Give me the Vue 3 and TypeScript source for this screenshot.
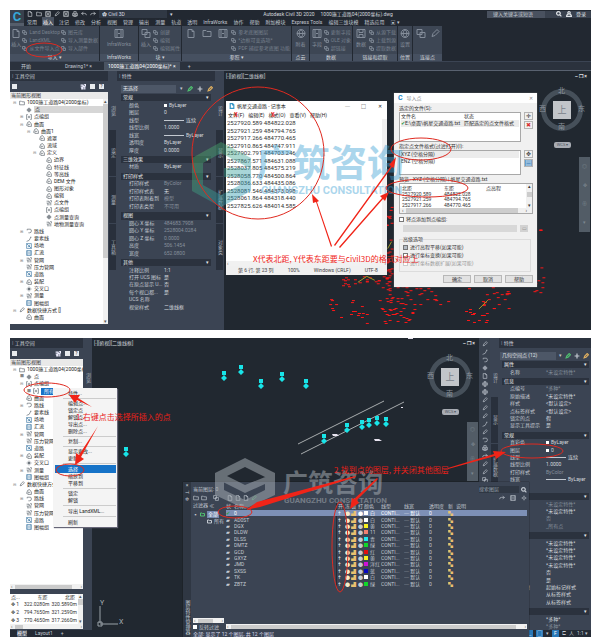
<script setup lang="ts">
import { h } from 'vue'

interface TreeRow { text: string; depth: number; icon: string; toggle?: string; on?: boolean }
interface Prop { label: string; value: string; mark?: 'swatch' | 'line' | 'dim' }
interface Section { title: string; rows: Prop[] }
interface Layer { name: string; color: string; label: string }

const shapes: Record<string, string> = {
  page: 'M2 1h4l2 2v6H2zM6 1v2h2',
  folder: 'M1 8V2h3l1 1h4v5z',
  point: 'M5 1v8M1 5h8M3 3h4v4H3z',
  group: 'M3 1H1v8h2M7 1h2v8H7M5 3v4M3 5h4',
  surface: 'M1 7l2-5 3-1 3 4v4H3zM3 8l1-3 3 1',
  line: 'M1 9q5 0 7-7M7 2h2',
  route: 'M2 2h5q2 0 2 3t-3 3H4M2 2v2',
  site: 'M1 1h8v8H1zM1 1l8 8M3 6h3V3',
  pipe: 'M1 2h4v7M8 9V5L5 3M1 5h2v4M7 1h2v3',
  cross: 'M5 1v8M1 5h8M3 3l4 4M7 3L3 7',
  frame: 'M1 1h8v8H1zM3 1v8M7 1v8M4 5h2',
  save: 'M1 1h8v8H1zM3 1v3h4V1M3 9V6h4v3',
  print: 'M1 4h8v4H1zM3 4V1h4v3M3 6h4v3H3z',
  undo: 'M4 2L1 4l3 3M1 4h5q3 0 3 3',
  redo: 'M6 2l3 2-3 3M9 4H4Q1 4 1 7',
  pen: 'M2 8l1-3 4-4 2 2-4 4z',
  block: 'M1 1h5v5H1zM4 4h5v5H4z',
  globe: 'M5 1a4 4 0 1 0 .1 0M1 5h8M5 1q-4 4 0 8q4-4 0-8',
  plus: 'M5 1v8M1 5h8',
  search: 'M4 1a3 3 0 1 0 .1 0M6 6l3 3',
  gear: 'M5 3a2 2 0 1 0 .1 0M5 1v2M5 7v2M1 5h2M7 5h2',
  user: 'M5 1a2 2 0 1 0 .1 0M1 9q0-4 4-4t4 4z',
}
const Glyph = (props: { kind: string }) =>
  h('svg', { viewBox: '0 0 10 10', 'aria-hidden': 'true' }, [h('path', { d: shapes[props.kind] ?? shapes.block })])

const t = (depth: number, text: string, icon: string, toggle = '', on = false): TreeRow => ({ depth, text, icon, toggle, on })
const drawing = '1000施工道路04(2000坐标)'

const common: TreeRow[] = [
  t(1, '路线', 'route', '+'), t(1, '要素线', 'line'), t(1, '场地', 'site'), t(1, '汇流', 'frame'),
  t(1, '管网', 'pipe', '+'), t(1, '压力管网', 'pipe'), t(1, '道路', 'site'), t(1, '装配', 'surface', '+'),
  t(1, '交叉口', 'cross'), t(1, '测量', 'pipe', '+'), t(1, '图幅组', 'frame'),
]
const treeA: TreeRow[] = [
  t(0, drawing, 'folder', '-'), t(1, '点', 'point', '', true), t(1, '点编组', 'group', '+'), t(1, '曲面', 'surface', '-'),
  t(2, '曲面1', 'surface', '-'), t(3, '遮罩', 'surface'), t(3, '流域', 'surface'), t(3, '定义', 'surface', '-'),
  t(4, '边界', 'surface'), t(4, '特征线', 'surface'), t(4, '等高线', 'surface'), t(4, 'DEM 文件', 'surface'),
  t(4, '图形对象', 'surface'), t(4, '编辑', 'surface'), t(4, '点文件', 'pipe'), t(4, '点编组', 'group'),
  t(4, '点测量查询', 'point'), t(4, '地物测量查询', 'pipe'), ...common,
  t(0, '数据快捷方式 []', 'pen', '-'), t(1, '曲面', 'surface'),
]
const treeB: TreeRow[] = [
  t(0, drawing, 'folder', '-'), t(1, '点', 'point', '■'), t(1, '点编组', 'group', '-'), t(2, '所有', 'group', '■', true),
  t(1, '曲面', 'surface'), ...common, t(0, '数据快捷方式', 'pen', '-'), t(1, '曲面', 'surface'), t(1, '路线', 'route', '+'),
  t(1, '管网', 'pipe'), t(1, '压力管网', 'pipe'), t(1, '道路', 'site'), t(1, '图幅组', 'frame'),
]

const p = (label: string, value: string, mark?: Prop['mark']): Prop => ({ label, value, mark })
const unset = '*未设定特性*'
const propsA: Section[] = [
  { title: '常规', rows: [p('颜色', 'ByLayer', 'swatch'), p('图层', '0'), p('线型', '连续', 'line'), p('线型比例', '1.0000'), p('线宽', 'ByLayer', 'line'), p('透明度', 'ByLayer'), p('厚度', '0.0000')] },
  { title: '三维效果', rows: [p('材质', 'ByLayer')] },
  { title: '打印样式', rows: [p('打印样式', 'ByColor', 'dim'), p('打印样式表', '无'), p('打印表附着到', '模型', 'dim'), p('打印表类型', '不可用', 'dim')] },
  { title: '视图', rows: [p('圆心 X 坐标', '484683.7908', 'dim'), p('圆心 Y 坐标', '2528004.0284', 'dim'), p('圆心 Z 坐标', '0.0000', 'dim'), p('高度', '506.1454', 'dim'), p('宽度', '652.0800', 'dim')] },
  { title: '其他', rows: [p('注释比例', '1:1'), p('打开 UCS 图标', '是'), p('在原点显示 U...', '否'), p('每个视口都...', '是'), p('UCS 名称', ''), p('视觉样式', '二维线框')] },
]
const propsB: Section[] = [
  { title: '属性', rows: [p('名称', unset, 'dim')] },
  { title: '信息', rows: [p('点编号', '*多种*', 'dim'), p('原始描述', unset), p('样式', '<默认设定>'), p('点标签样式', '<默认设定>'), p('锁定的点', '假'), p('显示工具提示', '是')] },
  { title: '常规', rows: [p('真彩色', 'ByLayer', 'swatch'), p('图层', '0', 'swatch'), p('线型', '连续', 'line'), p('线型比例', '1.0000'), p('打印样式', 'ByColor', 'dim'), p('线宽', 'ByLayer', 'line'), p('超链接', '')] },
  { title: '数据', rows: [p('名称', unset, 'dim'), p('描述', unset), p('锁定', '否', 'dim'), p('点编组', '_所有点', 'dim')] },
  { title: '标签', rows: [p('北距', unset), p('东距', unset), p('高程', unset), p('旋转', unset), p('固定', '否'), p('可见', '是'), p('标记选项', '起始标记样式'), p('方向', '从标签样式'), p('可见性', '从标签样式')] },
  { title: '几何', rows: [p('图形', '*多种*'), p('坐标', '*多种*', 'dim')] },
]

const ribbonTabs = ['常用', '插入', '注记', '修改', '分析', '视图', '管理', '输出', '测量', '轨道', '透明', 'InfraWorks', '协作', '帮助', '附加模块', 'Express Tools', '编辑三维块模', '精选应用']
const ribbon = [
  { title: '导入 ▾', cls: 'w90', big: ['page'], bigText: '插入', cols: [['Land Desktop', 'LandXML', '从文件导入点'], ['图元库', '导入测量数据', '导入部件']] },
  { title: 'InfraWorks', cls: 'w39', big: ['frame'], bigText: 'InfraWorks', cols: [] },
  { title: '块 ▾', cls: 'w43', big: ['block'], bigText: '插入', cols: [['创建', '编辑', '编辑属性']] },
  { title: '参照 ▾', cls: 'w108', big: ['page', 'folder', 'frame'], bigText: '', cols: [['参考底图图层', '*边框可变选项*', 'PDF 捕捉参考底图 功能']] },
  { title: '点云', cls: 'w18', big: ['globe'], bigText: '附着', cols: [] },
  { title: '数据', cls: 'w43', big: ['frame'], bigText: '字段', cols: [['更新字段', 'OLE 对象', '超链接']] },
  { title: '链接和提取', cls: 'w45', big: ['save'], bigText: '数据', cols: [['从源下载', '上载到源', '提取数据']] },
  { title: '位置', cls: 'w15', big: ['globe'], bigText: '设置', cols: [] },
  { title: '连接点', cls: 'w30', big: ['block', 'pen'], bigText: '', cols: [] },
]

const noteText = ['2527920.589 484822.028', '2527921.259 484794.765', '2527917.266 484770.465', '2527910.865 484747.911', '2527902.791 484703.246', '2527867.571 484631.088', '2528037.805 484575.219', '2528058.770 484500.864', '2528036.633 484435.086', '2528081.546 484373.098', '2528061.864 484318.440', '2527825.626 484014.585'].join('\n')

const layers: Layer[] = [
  { name: '0', color: '#ffffff', label: '白' }, { name: 'AD0ST', color: '#ffffff', label: '白' },
  { name: 'DGX', color: '#f8f020', label: '黄' }, { name: 'DLDW', color: '#f08070', label: '11' },
  { name: 'DLSS', color: '#20e8f0', label: '青' }, { name: 'DMTZ', color: '#10d828', label: '绿' },
  { name: 'GCD', color: '#e01010', label: '红' }, { name: 'GXYZ', color: '#f8f020', label: '黄' },
  { name: 'JMD', color: '#d010d8', label: '洋红' }, { name: 'SXSS', color: '#0808c0', label: '蓝' },
  { name: 'TK', color: '#ffffff', label: '白' }, { name: 'ZBTZ', color: '#10d828', label: '绿' },
]

const menuGroups: string[][] = [['特性...'], ['编辑点...', '锁定点', '解锁点', '导出点...', '删除点...'], ['复制...'], ['显示更改...', '更新'], ['选择', '缩放到', '平移到'], ['锁定', '解锁'], ['导出 LandXML...'], ['刷新']]

const surveyed: number[][] = [[223, 373], [240, 367], [260, 381], [281, 374], [305, 381], [323, 436], [346, 425], [361, 422], [368, 420], [376, 418], [385, 419], [125, 449]]

/* Scattered ground points: x, y, width, height, count for each cluster */
const clusters = [[384, 208, 6, 78, 26], [340, 278, 46, 10, 26], [325, 300, 55, 26, 22], [380, 288, 32, 38, 52], [412, 288, 34, 22, 15], [462, 290, 24, 34, 20], [484, 288, 28, 22, 16], [530, 268, 14, 28, 12], [534, 228, 6, 4, 3]]
let seed = 17
const rand = () => { seed = (seed * 16807) % 2147483647; return seed / 2147483647 }
const ground = clusters.flatMap(([x, y, w, hh, n]) => Array.from({ length: n }, () => [Math.round(x + rand() * w), Math.round(y + rand() * hh)]))
const tools = ['pen', 'line', 'route', 'point', 'page', 'globe', 'globe', 'pen', 'pen', 'pen', 'line', 'pen', 'route', 'print', 'redo', 'pen', 'pen', 'block']
</script>

<template>
  <main class="page">
    <section class="shot first">
      <header class="app-head">
        <div class="logo"><b>C</b></div>
        <div class="head-rows">
          <div class="title-row">
            <div class="qat">
              <Glyph v-for="(k, i) in ['page', 'folder', 'save', 'pen', 'save', 'print', 'undo', 'redo']" :key="i" :kind="k" class="ic" />
              <select class="product" aria-label="工作空间"><option>✿ Civil 3D</option></select><i>▾</i>
            </div>
            <div class="doc-title"><span>Autodesk Civil 3D 2020</span><span>1000施工道路04(2000坐标).dwg</span></div>
            <input class="help" aria-label="搜索" value="键入关键字或短语" />
            <div class="login"><Glyph kind="search" class="ic" /><Glyph kind="user" class="ic" />登录</div>
          </div>
          <nav class="tabs"><a v-for="(r, i) in ribbonTabs" :key="r" href="#" :class="{ on: i === 1 }">{{ r }}</a><a href="#">▣ ▾</a></nav>
        </div>
      </header>
      <div class="ribbon">
        <div v-for="r in ribbon" :key="r.title" class="rpanel" :class="r.cls">
          <div class="rbody">
            <div v-for="b in r.big" :key="b" class="big"><Glyph :kind="b" class="icb" /><span>{{ r.bigText }}</span></div>
            <ul v-for="(c, i) in r.cols" :key="i"><li v-for="x in c" :key="x"><Glyph kind="block" class="ics" />{{ x }}</li></ul>
          </div>
          <h4>{{ r.title }}</h4>
        </div>
      </div>
      <nav class="doctabs"><a href="#">开始</a><a href="#">Drawing1* <i>×</i></a><a href="#" class="on">{{ drawing }}* <i>×</i></a><a href="#">+</a></nav>

      <div class="work">
        <aside class="toolspace">
          <h3>⁞ 工具空间</h3>
          <div class="tsbar"><i class="sq"></i><span></span><Glyph kind="pipe" class="ic" /><i class="sq"></i><i class="sq">?</i></div>
          <select class="tsview" aria-label="视图"><option>当前图形视图</option></select>
          <div class="treebox">
            <ul class="tree">
              <li v-for="(r, i) in treeA" :key="i" :class="['d' + r.depth, { on: r.on }]"><b>{{ r.toggle === '+' ? '⊞' : r.toggle === '-' ? '⊟' : '' }}</b><Glyph :kind="r.icon" class="ict" :class="'k-' + r.icon" /><span>{{ r.text }}</span></li>
            </ul>
            <div class="vscroll"><i>▴</i><em></em><i>▾</i></div>
          </div>
        </aside>
        <div class="strip"><span class="lit">浏览</span><span>设定</span><span>测量</span><span>工具箱</span></div>
        <aside class="props">
          <h3>⁞ 特性</h3>
          <div class="pick"><select aria-label="对象"><option>无选择</option></select><i>▾</i><Glyph kind="pen" class="ic green" /><Glyph kind="plus" class="ic" /><Glyph kind="pen" class="ic gold" /></div>
          <div class="plist endgap">
            <template v-for="s in propsA" :key="s.title">
              <h4>{{ s.title }}<i>▾</i></h4>
              <div v-for="r in s.rows" :key="r.label" class="prow"><span>{{ r.label }}</span><span :class="r.mark"><i v-if="r.mark === 'swatch' || r.mark === 'line'"></i>{{ r.value }}</span></div>
            </template>
          </div>
        </aside>
        <div class="strip"><span class="lit">设计</span><span>显示</span><span>扩展数据</span><span>对象类</span></div>
        <div class="canvas">
          <svg class="fill" viewBox="221 71 370 259" preserveAspectRatio="xMinYMin meet">
            <rect v-for="(g, i) in ground" :key="i" :x="g[0]" :y="g[1]" width="3" height="1" fill="#ff1818" />
            <path d="M478 311l9-9M356 284l9-6 8 4M386 250l4-7" stroke="#a09a28" fill="none" />
          </svg>
          <span class="vplabel">[-][俯视][二维线框]</span>
          <span class="winctl">– ❐ ×</span>
          <div class="cube"><div class="ring"></div><b>上</b><i class="n">北</i><i class="s">南</i><i class="w">西</i><i class="e">东</i><em>WCS ▾</em></div>
          <div class="navbar"><span>◎</span><span>✥</span><span>⊕</span><span>▾</span></div>

          <section class="notepad">
            <header><Glyph kind="page" class="ic blue" /><span>帆星交通道路 - 记事本</span><i>─</i><i>□</i><i>✕</i></header>
            <nav><button>文件(F)</button><button>编辑(E)</button><button>格式(O)</button><button>查看(V)</button><button>帮助(H)</button></nav>
            <textarea aria-label="文本" spellcheck="false" :value="noteText"></textarea>
            <div class="hs"><i>‹</i><i>›</i></div>
            <footer><span>第 6 行, 第 23 列</span><span>100%</span><span>Windows (CRLF)</span><span>UTF-8</span></footer>
          </section>

          <section class="dialog">
            <header><b>C</b><span>导入点</span><i>✕</i></header>
            <div class="dbody">
              <p>选定的文件(S):</p>
              <div class="pair">
                <div class="list tall"><div class="cols"><span>文件名</span><span>状态</span></div><div class="cols sel"><span><i class="ok">✔</i>E:\桌面\帆星交通道路.txt</span><span>匹配选定的点文件格式</span></div></div>
                <div class="side"><button aria-label="添加">✛</button><button aria-label="删除" class="del">✖</button></div>
              </div>
              <p>指定点文件格式(过滤打开)(I):</p>
              <div class="pair">
                <div class="list short"><div class="sel">XYZ (空格分隔)</div><div>ENZ (空格分隔)</div></div>
                <div class="side"><button aria-label="编辑">✥</button><button aria-label="管理" class="mng">▤</button></div>
              </div>
              <p>预览 - XYZ (空格分隔) | 帆星交通道路.txt</p>
              <div class="preview">
                <table><thead><tr><th>北距</th><th>东距</th><th>点高程</th></tr></thead>
                  <tbody><tr><td>2527920.589</td><td>484822.028</td><td></td></tr><tr><td>2527921.259</td><td>484794.765</td><td></td></tr><tr><td>2527917.266</td><td>484770.465</td><td></td></tr></tbody></table>
                <div class="pvs"><i>▴</i><em></em><i>▾</i></div>
                <div class="phs"><i>‹</i><em></em><i>›</i></div>
              </div>
              <label class="chk"><input type="checkbox" />将点添加到点编组:</label>
              <div class="dis"><select disabled aria-label="点编组"></select><button disabled>▭</button></div>
              <fieldset>
                <legend>高级选项</legend>
                <label class="chk"><input type="checkbox" checked />进行高程平移(如果可能)</label>
                <label class="chk"><input type="checkbox" />进行坐标变换(如果可能)</label>
                <label class="chk off"><input type="checkbox" disabled />进行坐标数据扩展(如果可能)</label>
              </fieldset>
              <div class="btns"><button>确定</button><button>取消</button><button>帮助</button></div>
            </div>
          </section>
        </div>
      </div>

      <svg class="fill notes" viewBox="10 10 581 320" preserveAspectRatio="xMinYMin meet">
        <defs><linearGradient id="wm" x1="0" y1="0" x2="1" y2="1"><stop offset="0" stop-color="#58b858" /><stop offset="1" stop-color="#2090c8" /></linearGradient></defs>
        <g opacity=".42">
          <path d="M192 158l29-16 30 16v11l-30-16-18 10v22l18 10 19-10v-8h-16v-9h27v23l-30 16-29-16z" fill="url(#wm)" />
          <text x="256" y="177" font-size="37" font-weight="700" fill="#3a9fd4">广筑咨询</text>
          <text x="261" y="194" font-size="11" font-weight="700" fill="#3a9fd4" class="lat">GUANGZHU CONSULTATION</text>
        </g>
        <g fill="none" stroke="#e02a20"><ellipse cx="44" cy="50" rx="18" ry="7" /><ellipse cx="258" cy="153" rx="66" ry="66" /><ellipse cx="421" cy="149" rx="30" ry="11" /><ellipse cx="427" cy="188" rx="41" ry="9" /></g>
        <g fill="#f02418"><path d="M331 247l-15-45-3 1-1-9 7 7-2 1 15 44zM334 245l57-79-2-1 7-8-2 11-2-1-57 79zM339 247l43-49-2-2 9-4-4 9-2-2-43 49z" /></g>
        <g fill="#f02418" class="cn"><text x="253" y="262" font-size="8">X代表北距, Y代表东距要与civil3D的格式对应上</text><text x="234" y="117" font-size="6" font-weight="700">X</text><text x="271" y="117" font-size="6" font-weight="700">X</text></g>
      </svg>
    </section>

    <section class="shot second">
      <div class="work">
        <aside class="toolspace narrow">
          <h3>⁞ 工具空间</h3>
          <div class="tsbar"><i class="sq"></i><span></span><Glyph kind="pipe" class="ic" /><i class="sq"></i><i class="sq">?</i></div>
          <select class="tsview" aria-label="视图"><option>当前图形视图</option></select>
          <div class="treebox">
            <ul class="tree half">
              <li v-for="(r, i) in treeB" :key="i" :class="['d' + r.depth, { pick: r.on }]"><b>{{ r.toggle === '+' ? '⊞' : r.toggle === '-' ? '⊟' : r.toggle }}</b><Glyph :kind="r.icon" class="ict" :class="'k-' + r.icon" /><span>{{ r.text }}</span></li>
            </ul>
          </div>
          <div class="hs thick"><i>‹</i><em></em><i>›</i></div>
          <div class="ptable">
            <table><thead><tr><th>点...</th><th>东距</th><th>北距</th></tr></thead>
              <tbody><tr><td>✥ 1</td><td>322.0280m</td><td>320.5890m</td></tr><tr><td>✥ 2</td><td>794.7650m</td><td>321.2590m</td></tr><tr><td>✥ 3</td><td>770.4650m</td><td>317.2660m</td></tr></tbody></table>
            <div class="vscroll"><i>▴</i><em class="sm"></em><i>▾</i></div>
          </div>
          <div class="hs thick"><i>‹</i><em class="sm"></em><i>›</i></div>
        </aside>
        <div class="strip wide"><span class="lit">浏览</span></div>
        <div class="canvas">
          <svg class="fill" viewBox="91 338 387 292" preserveAspectRatio="xMinYMin meet">
            <path d="M297 444l86-43M300 454l103-52" stroke="#a8acae" fill="none" />
            <g fill="#18e4e8"><path v-for="(s, i) in surveyed" :key="i" :d="`M${s[0] - 2} ${s[1] - 2}h4v4h-4zM${s[0]} ${s[1] + 2}l3 3-3 3-3-3z`" /></g>
            <path d="M331 434h5l2 2h-6zM373 439h5l3 2h-7zM400 407h2v1h-2zM407 338h5v1h-5z" fill="#e8e4f0" />
            <path d="M99 623V606M99 624h18M97 622h4v4h-4z" stroke="#9aa2a8" fill="none" />
            <text x="99" y="605" font-size="7" fill="#a8b0b6" class="lat">Y</text><text x="118" y="624" font-size="7" fill="#a8b0b6" class="lat">X</text>
          </svg>
          <span class="vplabel">[-][俯视][二维线框]</span>
          <span class="winctl">– ❐ ×</span>
          <div class="cube"><div class="ring"></div><b>上</b><i class="n">北</i><i class="s">南</i><i class="w">西</i><i class="e">东</i><em>WCS ▾</em></div>
          <div class="navbar low"><span>◎</span><span>✥</span><span>⊕</span><span>▾</span></div>
        </div>
        <div class="toolcol"><Glyph v-for="(k, i) in tools" :key="i" :kind="k" class="ic" /></div>
        <div class="strip"><span class="lit">设计</span><span>显示</span><span>扩展数据</span><span>对象类</span></div>
        <aside class="props rightp">
          <h3>⁞ 特性</h3>
          <div class="pick"><select aria-label="对象"><option>几何空间点 (12)</option></select><i>▾</i><Glyph kind="pen" class="ic green" /><Glyph kind="plus" class="ic" /><Glyph kind="pen" class="ic gold" /></div>
          <div class="plist">
            <template v-for="s in propsB" :key="s.title">
              <h4>{{ s.title }}<i>▾</i></h4>
              <div v-for="r in s.rows" :key="r.label" class="prow"><span>{{ r.label }}</span><span :class="r.mark"><i v-if="r.mark === 'swatch' || r.mark === 'line'"></i>{{ r.value }}</span></div>
            </template>
          </div>
        </aside>
      </div>
      <footer class="status"><a href="#" class="on">模型</a><a href="#">Layout1</a><a href="#">+</a><span></span><i class="hot">∟</i><i class="hot">▢</i><em>▾</em><i class="hot">F</i><em>⊏</em><em>人</em><em>1:1 ▾</em></footer>

      <menu class="ctx">
        <li v-for="(g, i) in menuGroups" :key="i"><button v-for="m in g" :key="m" :class="{ on: m === '选择' }">{{ m }}</button></li>
      </menu>

      <section class="layers">
        <div class="ltitle"><i>×</i><i>⊣</i><i>✲</i><span>图层特性管理器</span></div>
        <div class="lbody">
          <div class="ltop"><span>当前图层: 0</span><input aria-label="搜索图层" value="搜索图层" /><Glyph kind="search" class="ic" /></div>
          <div class="ltools"><Glyph v-for="(k, i) in ['folder', 'folder', 'block', 'page', 'page', 'page']" :key="i" :kind="k" class="ic" :class="'g' + i" /><Glyph kind="pen" class="ic green" /><span></span><Glyph kind="redo" class="ic" /><Glyph kind="frame" class="ic" /><Glyph kind="gear" class="ic" /></div>
          <div class="lmain">
            <div class="filter">
              <h4>过滤器 <i>≪</i></h4>
              <p>▪ <Glyph kind="folder" class="ics green" /><b>全部</b></p>
              <p class="sub"><Glyph kind="folder" class="ics" />所有</p>
              <span class="grow"></span>
              <div class="hs thick"><i>‹</i><em></em><i>›</i></div>
              <label><input type="checkbox" />反转过滤</label>
            </div>
            <div class="ltablebox">
              <table>
                <thead><tr><th>状</th><th>名称</th><th>开</th><th>冻</th><th>锁</th><th>打</th><th>颜色</th><th>线型</th><th>线宽</th><th>透明度</th><th>新</th><th>说明</th></tr></thead>
                <tbody><tr v-for="(l, i) in layers" :key="l.name" :class="{ on: i === 0 }">
                  <td :class="{ cur: i === 0 }">{{ i === 0 ? '✔' : '▰' }}</td><td>{{ l.name }}</td><td class="bulb">†</td><td class="sun">●</td><td class="lock">▟</td><td>●</td>
                  <td><i class="chip" :style="{ background: l.color }"></i>{{ l.label }}</td><td>CONTI...</td><td>─ 默认</td><td>0</td><td class="lock">▚</td><td></td>
                </tr></tbody>
              </table>
              <span class="grow"></span>
              <div class="hs thick"><i>‹</i><em></em><i>›</i></div>
            </div>
          </div>
          <p class="lfoot">全部: 显示了 12 个图层, 共 12 个图层</p>
        </div>
      </section>

      <svg class="fill notes" viewBox="10 338 581 299" preserveAspectRatio="xMinYMin meet">
        <g fill="#a2a9b0" opacity=".55">
          <path d="M215 473l30-15 30 15v9l-30-15-18 9 18 9 30-12v22l-30 14-30-14v-19l9 4v10l21 10 20-10v-6l-20 9-30-15z" />
          <text x="283" y="492" font-size="25" font-weight="700">广筑咨询</text>
          <text x="284" y="503" font-size="8" font-weight="700" class="lat">GUANGZHU CONSULTATION</text>
        </g>
        <g fill="none" stroke="#e02a20"><ellipse cx="47" cy="390" rx="23" ry="7" /><ellipse cx="70" cy="470" rx="14" ry="6" /><ellipse cx="235" cy="512" rx="17" ry="6" /><ellipse cx="340" cy="547" rx="8" ry="45" /><ellipse cx="532" cy="451" rx="31" ry="7" /></g>
        <path d="M92 407l-15-7-2 3-6-8 11 0-2 3zM98 426l-17 31 3 2-9 6 1-12 3 2zM356 477l-96 30-14 3 11-8 98-26zM378 479l-21 21 2 3-9 6 2-11 2 1 23-21zM448 468l46-14-1-3 13 1-10 7-1-3-47 13z" fill="#f02418" />
        <g fill="#e82018" font-size="8" class="cn"><text x="76" y="420">1.右键点击选择所插入的点</text><text x="334" y="473">2.找到点的图层, 并关闭其他图层</text></g>
      </svg>
    </section>
  </main>
</template>

<style>
body { background: #fff; }
</style>

<style scoped>
.page, .page * { box-sizing: border-box; }
.page { padding: 10px 8px 6px 10px; display: flex; flex-direction: column; gap: 8px; font: 5px/7px Roboto, "Noto Sans CJK SC", sans-serif; color: #c3c9d1; }
.page ul, .page p, .page h3, .page h4, .page menu { margin: 0; padding: 0; list-style: none; }
.page h3, .page h4, .page i, .page em { font-weight: 400; font-style: normal; font-size: 5px; }
.page a { color: inherit; text-decoration: none; }
.page button, .page select, .page input, .page textarea { font: inherit; color: inherit; border: 0; border-radius: 0; padding: 0; margin: 0; background: none; appearance: none; min-width: 0; outline: 0; white-space: nowrap; }
.page table { border-collapse: collapse; border-spacing: 0; }
.page th, .page td { padding: 0; font-weight: 400; text-align: left; white-space: nowrap; overflow: hidden; }
.shot { position: relative; overflow: hidden; display: flex; flex-direction: column; background: #3b4453; white-space: nowrap; }
.first { min-height: 320px; }
.second { min-height: 299px; }
.fill { position: absolute; inset: 0; width: 100%; height: 100%; pointer-events: none; }
.cn, .notes text { font-family: "Noto Sans CJK SC", sans-serif; }
.notes .lat, .lat { font-family: Roboto, sans-serif; }
.ic, .ics, .ict, .icb { flex: none; fill: none; stroke: currentColor; stroke-width: 2; }
.ic { width: 6px; height: 6px; }
.ics { width: 5px; height: 5px; }
.ict { width: 6px; height: 6px; stroke-width: 1; color: #4c565e; }
.icb { width: 10px; height: 11px; stroke-width: 1; }
.k-site, .k-frame { color: #2c6c9c; }
.green { color: #50c070; }
.gold { color: #e0b060; }
.blue { color: #3898c8; }

.app-head { display: flex; height: 16px; background: #222831; }
.logo { width: 14px; background: #39414d; text-align: center; color: #36a8d8; border-bottom: 3px solid #555e6b; }
.logo b { font: 700 13px/13px Roboto, sans-serif; }
.head-rows { flex: 1; min-width: 0; }
.title-row { display: flex; align-items: center; height: 8px; }
.qat { width: 149px; display: flex; gap: 3px; align-items: center; padding-left: 3px; color: #d8dde2; }
.qat .ic { stroke-width: 1; }
.page .product { flex: 1; height: 8px; padding-left: 3px; background: #303844; }
.doc-title { flex: 1; display: flex; gap: 6px; justify-content: center; color: #d5d9df; padding-right: 4px; }
.page .help { width: 58px; height: 7px; background: #49515f; padding-left: 6px; }
.login { display: flex; align-items: center; gap: 4px; padding-left: 11px; width: 46px; background: #39414e; color: #e0e4e8; }
.tabs { display: flex; gap: 6px; padding-left: 3px; line-height: 8px; }
.tabs a { flex: none; }
.tabs .on { background: #4a5361; color: #fff; box-shadow: 0 0 0 1px #4a5361; }
.ribbon { display: flex; height: 35px; background: #222831; gap: 1px; color: #77808d; }
.rpanel { flex: none; display: flex; flex-direction: column; background: #3d4654; }
.rbody { flex: 1; display: flex; gap: 1px; padding: 2px 1px; }
.rbody li { display: flex; gap: 2px; align-items: center; line-height: 8px; height: 8px; }
.rbody ul { flex: none; }
.big { display: flex; flex-direction: column; align-items: center; gap: 2px; flex: 1; color: #848d9a; min-width: 0; }
.rpanel h4 { text-align: center; background: #465060; color: #d3d7dc; line-height: 7px; height: 7px; }
.w90 { width: 89px; } .w39 { width: 38px; } .w43 { width: 42px; } .w108 { width: 109px; } .w18 { width: 17px; } .w45 { width: 44px; } .w15 { width: 14px; } .w30 { width: 29px; }
.doctabs { display: flex; height: 9px; line-height: 8px; margin-top: 1px; background: #2b323d; border-bottom: 1px solid #596270; padding-left: 11px; }
.doctabs a { padding-right: 12px; margin-right: 10px; }
.doctabs a:nth-child(2) { margin: 0 0 0 12px; }
.doctabs .on { background: #4a5462; color: #fff; padding: 0 4px; margin-right: 8px; }

.work { flex: 1; display: flex; min-height: 0; }
.first .work { min-height: 259px; }
.second .work { min-height: 292px; }
.toolspace { width: 98px; display: flex; flex-direction: column; padding-bottom: 6px; }
.toolspace h3, .props h3 { height: 10px; line-height: 10px; padding-left: 2px; background: #2b323e; color: #cfd4da; }
.tsbar { display: flex; align-items: center; gap: 4px; height: 11px; padding: 0 4px 0 2px; color: #eef; }
.tsbar span, .grow { flex: 1; }
.tsbar .sq { width: 5px; height: 5px; background: #e8ebee; color: #333; line-height: 5px; text-align: center; }
.page .tsview { height: 7px; background: #e9e9e9; color: #333; flex: none; padding-left: 1px; }
.treebox { flex: 1; display: flex; min-height: 0; background: #fff; color: #222; overflow: hidden; }
.tree { flex: 1; min-width: 0; display: grid; grid-auto-rows: 1fr; overflow: hidden; }
.page .first .tree { padding-bottom: 3px; }
.tree.half { height: 165px; flex: 1; }
.tree li { display: flex; align-items: center; gap: 2px; min-height: 0; line-height: 5px; overflow: hidden; }
.tree b { width: 4px; font-weight: 400; color: #888; font-size: 4px; flex: none; }
.tree li span { height: 7px; line-height: 7px; }
.d0 { padding-left: 3px; } .d1 { padding-left: 10px; } .d2 { padding-left: 17px; } .d3 { padding-left: 23px; } .d4 { padding-left: 30px; }
.tree .on span { flex: 1; background: #d6d6d6; padding-left: 1px; }
.tree .pick span { flex: 1; background: #1673c8; color: #fff; padding-left: 3px; }
.tree li.pick { margin: 0; padding-top: 0; height: auto; }
.vscroll { width: 5px; flex: none; display: flex; flex-direction: column; align-items: center; background: #f1f1f1; color: #555; line-height: 5px; }
.vscroll em { width: 5px; height: 154px; background: #cdcdcd; }
.vscroll em.sm { height: 6px; }
.vscroll i:last-child { margin-top: auto; }
.strip { width: 9px; flex: none; display: flex; flex-direction: column; padding: 21px 1px 0 1px; background: #3b4453; }
.strip span { writing-mode: vertical-rl; height: 47px; background: #29303c; text-align: center; color: #aab1bb; line-height: 7px; border-bottom: 1px solid #3b4453; }
.strip .lit { background: #3b4453; height: 38px; }
.props { width: 98px; display: flex; flex-direction: column; }
.props > .pick { display: flex; align-items: center; gap: 4px; height: 13px; margin: 0 2px 0 4px; padding-top: 2px; }
.page .pick select { width: 58px; height: 8px; background: #4d5767; color: #e0e4e8; padding-left: 2px; }
.plist { flex: 1; display: flex; flex-direction: column; min-height: 0; margin: 0 4px; }
.endgap { padding-bottom: 19px; }
.plist > * { flex: 1 1 0; min-height: 0; display: flex; align-items: center; line-height: 7px; }
.page .plist h4 { background: #2b323e; color: #e6e8eb; margin-top: 2px; padding: 0 2px; justify-content: space-between; }
.page .plist h4:first-child { margin-top: 0; }
.prow span:first-child { width: 43px; padding-left: 8px; overflow: hidden; flex: none; }
.prow span:last-child { display: flex; align-items: center; gap: 2px; color: #d5d9de; }
.prow span.dim { color: #87909c; }
.swatch i { width: 3px; height: 3px; background: #fff; }
.line i { width: 20px; height: 1px; background: #c3c9d1; }

.canvas { flex: 1; min-width: 0; position: relative; overflow: hidden; background: #212830; }
.vplabel { position: absolute; left: 2px; top: 2px; color: #d0d4d8; }
.winctl { position: absolute; right: 4px; top: 2px; color: #e0e3e6; font-weight: 700; }
.cube { position: absolute; right: 8px; top: 18px; width: 42px; height: 62px; color: #8c949d; }
.ring { width: 42px; height: 42px; border: 5px solid #46505a; border-radius: 50%; }
.cube b { position: absolute; left: 12px; top: 12px; width: 18px; height: 18px; background: #c2c5c9; color: #7a828b; font: 9px/17px "Noto Sans CJK SC", sans-serif; text-align: center; }
.page .cube i { position: absolute; font-size: 7px; }
.cube .n { left: 17px; top: -1px; } .cube .s { left: 17px; bottom: 20px; } .cube .w { left: -2px; top: 17px; } .cube .e { right: -2px; top: 17px; }
.page .cube em { position: absolute; left: 13px; bottom: 3px; width: 17px; height: 6px; line-height: 6px; background: #a8acb3; color: #4c5560; border-radius: 2px; text-align: center; font-size: 4px; }
.navbar { position: absolute; right: 1px; top: 86px; width: 11px; height: 75px; background: #525c66; color: #7d8790; display: flex; flex-direction: column; justify-content: space-around; align-items: center; }
.navbar.low { top: 84px; height: 59px; }

.notepad { position: absolute; left: 2px; top: 30px; width: 161px; min-height: 174px; display: flex; flex-direction: column; background: #fff; color: #222; }
.notepad header { display: flex; align-items: center; height: 10px; gap: 2px; padding: 0 5px 0 3px; }
.notepad header span { flex: 1; }
.notepad header i { width: 14px; text-align: right; }
.notepad nav { display: flex; gap: 4px; padding-left: 2px; height: 8px; line-height: 8px; }
.page .notepad textarea { flex: 1; resize: none; overflow: hidden; font-size: 6px; line-height: 1.25; padding-left: 1px; white-space: pre; border-right: 5px solid #f0f0f0; color: #333; }
.hs { display: flex; justify-content: space-between; align-items: center; height: 5px; line-height: 5px; background: #f1f1f1; color: #555; padding: 0 1px; }
.hs.thick { gap: 2px; flex: none; }
.hs em { flex: 1; height: 4px; background: #cbcbcb; margin-right: 6px; }
.hs em.sm { flex: none; width: 8px; margin-right: auto; }
.notepad footer { display: flex; gap: 14px; height: 9px; line-height: 9px; background: #f0f0f0; padding-left: 12px; color: #444; }

.dialog { position: absolute; left: 170px; top: 22px; width: 143px; min-height: 194px; background: #f0f0f0; color: #333; box-shadow: 0 0 1px #888; }
.dialog header { display: flex; gap: 4px; height: 10px; line-height: 10px; background: #fff; padding: 0 4px; color: #888; }
.dialog header b { color: #2088c8; font-size: 7px; }
.dialog header span { flex: 1; }
.dbody { padding: 1px 4px 3px 5px; display: flex; flex-direction: column; }
.dbody p { height: 8px; line-height: 8px; }
.pair { display: flex; gap: 3px; }
.list { flex: 1; background: #fff; border: 1px solid #a8a8a8; padding: 0 1px; }
.list > div { height: 7px; }
.tall { height: 30px; } .short { height: 25px; }
.cols { display: flex; }
.cols span:first-child { width: 63px; }
.sel { background: #ececec; }
.ok { color: #209040; }
.side { width: 9px; display: flex; flex-direction: column; gap: 1px; }
.page .side button { height: 8px; border: 1px solid #b4b4b4; font-size: 6px; line-height: 6px; text-align: center; }
.page .side .del { color: #d83030; }
.page .side .mng { background: #6098c8; color: #fff; }
.preview { display: grid; grid-template-columns: 1fr 6px; background: #fff; border: 1px solid #a8a8a8; height: 31px; overflow: hidden; }
.preview table { table-layout: fixed; width: 100%; height: 24px; }
.page .preview th, .page .preview td { padding-left: 2px; height: 5px; line-height: 5px; }
.page .preview th { height: 8px; }
.pvs { display: flex; flex-direction: column; justify-content: space-between; align-items: center; background: #f0f0f0; line-height: 5px; }
.pvs em { width: 5px; height: 5px; background: #ccc; margin-bottom: 4px; }
.phs { display: flex; grid-column: 1 / 3; background: #f0f0f0; height: 5px; line-height: 5px; gap: 2px; padding: 0 5px 0 2px; }
.phs em { flex: 1; background: #cdcdcd; margin-right: 5px; }
.chk { display: flex; align-items: center; gap: 2px; height: 8px; }
.dbody > .chk { height: 11px; }
.page .chk input { width: 5px; height: 5px; border: 1px solid #777; background: #fff; flex: none; }
.page .chk input:checked { background: #b4bcc4; }
.off { color: #999; }
.page .off input { border-color: #ccc; }
.dis { display: flex; gap: 3px; padding-left: 4px; height: 8px; }
.page .dis select { width: 114px; background: #cdcdcd; height: 7px; }
.page .dis button { width: 8px; height: 7px; background: #d2d2d2; color: #999; }
.dbody fieldset { border: 1px solid #dcdcdc; margin: 3px 2px 0 0; padding: 0 4px 4px 3px; min-width: 0; }
.dbody legend { padding: 0; line-height: 7px; }
.btns { display: flex; justify-content: flex-end; gap: 3px; padding-top: 3px; }
.page .btns button { width: 28px; height: 8px; background: #e2e2e2; border: 1px solid #b8b8b8; line-height: 6px; text-align: center; }

.narrow { width: 73px; padding-bottom: 1px; }
.strip.wide { width: 9px; }
.toolcol { width: 11px; flex: none; display: flex; flex-direction: column; gap: 2px; align-items: center; padding-top: 3px; background: #39424f; color: #cbd2da; }
.toolcol .ic { stroke-width: 1; }
.rightp { width: 92px; }
.rightp > .pick { gap: 3px; margin-left: 1px; }
.rightp .plist { margin: 0 2px 0 3px; }
.rightp .prow span:first-child { width: 44px; }
.ptable { display: flex; height: 30px; margin-top: 5px; background: #fff; color: #333; }
.ptable table { flex: 1; table-layout: fixed; width: 67px; }
.ptable th:first-child { width: 13px; }
.page .ptable td, .page .ptable th { padding-left: 1px; height: 7px; }
.page .ptable th + th { text-align: right; padding-right: 3px; }
.status { display: flex; align-items: center; gap: 8px; height: 7px; flex: none; background: #242b35; padding: 0 3px 0 7px; line-height: 7px; }
.status span { flex: 1; }
.status .on { background: #465060; color: #fff; }
.status .hot { width: 7px; background: #2878b8; color: #fff; text-align: center; }
.status i, .status em { margin-left: -5px; }

.ctx { position: absolute; left: 43px; top: 50px; width: 64px; background: #f4f4f4; color: #222; box-shadow: 1px 1px 1px #667; display: flex; flex-direction: column; }
.ctx li { border-bottom: 1px solid #ccc; margin: 0 1px 0 10px; padding: 1px 0; display: flex; flex-direction: column; }
.ctx li:last-child { border: 0; }
.page .ctx button { text-align: left; height: 7px; line-height: 7px; padding-left: 5px; }
.page .ctx .on { background: #1673c8; color: #fff; margin-left: -8px; padding-left: 13px; height: 8px; }
.ctx li:first-child, .ctx li:nth-child(7), .ctx li:last-child { padding: 2px 0 1px; }

.layers { position: absolute; left: 173px; top: 144px; right: 62px; bottom: 0; display: flex; background: #3b4453; box-shadow: 0 0 1px #111; }
.ltitle { width: 8px; background: #2f3743; display: flex; flex-direction: column; align-items: center; line-height: 7px; padding-bottom: 2px; }
.ltitle span { writing-mode: vertical-rl; margin-top: auto; }
.lbody { flex: 1; min-width: 0; display: flex; flex-direction: column; padding: 3px 2px 0 2px; }
.ltop { display: flex; align-items: center; height: 9px; gap: 2px; }
.ltop span { flex: 1; }
.page .ltop input { width: 40px; height: 7px; background: #2f3743; color: #99a2ae; }
.ltools { display: flex; align-items: center; gap: 2px; height: 8px; color: #cdd3da; }
.ltools .ic { stroke-width: 1; }
.ltools .g2 { margin-left: 4px; margin-right: 6px; }
.ltools span { flex: 1; }
.ltools .ic:nth-last-child(-n+3) { margin-left: 3px; }
.lmain { flex: 1; display: flex; min-height: 0; }
.filter { width: 33px; flex: none; display: flex; flex-direction: column; overflow: hidden; padding-right: 2px; }
.filter h4 { height: 9px; }
.filter p { display: flex; align-items: center; gap: 2px; height: 7px; }
.filter p b { font-weight: 400; background: #7487ad; color: #fff; padding: 0 1px; }
.page .filter .sub { padding-left: 14px; }
.filter label { display: flex; gap: 2px; align-items: center; height: 8px; }
.page .filter input { width: 4px; height: 4px; background: #fff; }
.ltablebox { flex: 1; min-width: 0; display: flex; flex-direction: column; padding-bottom: 2px; }
.ltablebox table { table-layout: fixed; width: 100%; height: 85px; background: linear-gradient(#252c37, #252c37) 110px 0 / 1px 100% no-repeat; }
.ltablebox th, .ltablebox td { height: 6px; line-height: 6px; }
.ltablebox thead th { height: 8px; }
.ltablebox th:nth-child(1) { width: 8px; } .ltablebox th:nth-child(2) { width: 104px; } .ltablebox th:nth-child(3) { width: 7px; } .ltablebox th:nth-child(4) { width: 6px; } .ltablebox th:nth-child(5) { width: 7px; } .ltablebox th:nth-child(6) { width: 6px; } .ltablebox th:nth-child(7) { width: 17px; } .ltablebox th:nth-child(8) { width: 23px; } .ltablebox th:nth-child(9) { width: 25px; } .ltablebox th:nth-child(10) { width: 19px; } .ltablebox th:nth-child(11) { width: 8px; }
.ltablebox .on { background: #7d90b6; color: #fff; }
.cur { color: #28a040; }
.sun { color: #f4eccc; }
.lock { color: #e8c070; }
.bulb { color: #e8f0f8; }
.chip { display: inline-block; width: 4px; height: 4px; margin-right: 2px; }
.lfoot { height: 6px; line-height: 7px; flex: none; overflow: hidden; color: #dde; }
</style>
